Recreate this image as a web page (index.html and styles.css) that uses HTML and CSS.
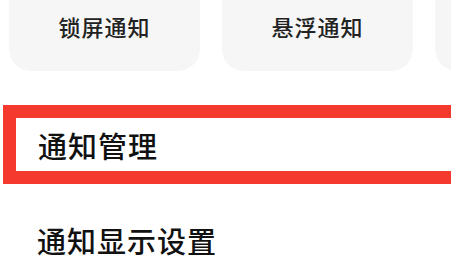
FILE: index.html
```html
<!DOCTYPE html>
<html lang="zh-CN">
  <head>
    <meta charset="utf-8">
    <title>通知管理</title>
    <meta name="viewport" content="width=device-width, initial-scale=1.0">
    <link rel="stylesheet" href="styles.css">
  </head>
  <body>
    <div class="style-cards">
      <div class="style-card">锁屏通知</div>
      <div class="style-card">悬浮通知</div>
      <div class="style-card"></div>
    </div>
    <ul class="setting-list">
      <li class="setting-item is-marked">通知管理</li>
      <li class="setting-item">通知显示设置</li>
    </ul>
  </body>
</html>
```

FILE: styles.css
```css
html, body {
  margin: 0;
  padding: 0;
  background-color: #fff;
  overflow: hidden;
}
body {
  width: 451px;
  height: 264px;
  font-family: "Noto Sans CJK SC", "Noto Sans", sans-serif;
  color: #111;
}

/* top row of notification style cards, scrolled so their tops are hidden */
.style-cards {
  display: flex;
  gap: 22px;
  padding-left: 9px;
  margin-top: -20px;
}
.style-card {
  flex: none;
  width: 191px;
  height: 24px;
  padding: 34px 0 33px;
  line-height: 24px;
  font-size: 22px;
  font-weight: 500;
  letter-spacing: 1px;
  text-align: center;
  color: #222;
  background-color: #f6f6f6;
  border-radius: 22px;
}

.setting-list {
  list-style: none;
  margin: 34px 0 0;
  padding: 0;
}
.setting-item {
  font-size: 29px;
  font-weight: 500;
  letter-spacing: 1px;
  line-height: 32px;
  padding: 0 0 0 37px;
}
.setting-item.is-marked {
  margin-left: 3px;
  width: 470px;
  padding: 11px 0 10px 22px;
  border: 13px solid #f43a2e;
}
.setting-item + .setting-item {
  padding-top: 40px;
}
```
